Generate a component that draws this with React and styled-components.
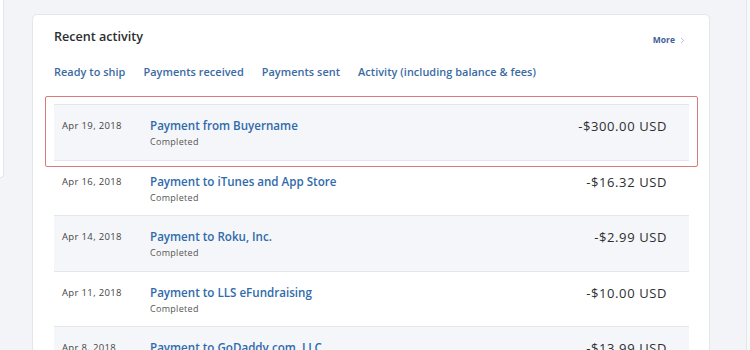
import React from "react";
import styled, { createGlobalStyle } from "styled-components";
import { ChevronRight } from "lucide-react";

const GlobalStyle = createGlobalStyle`
  html, body {
    margin: 0;
    height: 350px;
    overflow: hidden;
    background: #f2f4f7;
    font-family: "Open Sans", "Noto Sans", sans-serif;
  }
`;

const Page = styled.div`
  display: flex;
  align-items: flex-start;
  width: 750px;
  height: 350px;
  overflow: hidden;
`;

const SideStub = styled.div`
  flex: none;
  width: 3px;
  height: 177px;
  background: #fff;
  border: 1px solid #e3e6ea;
  border-left: none;
  border-top: none;
  border-bottom-right-radius: 6px;
`;

const RightStub = styled.div`
  flex: none;
  width: 3px;
  height: 350px;
  margin-left: auto;
  background: #f8f9fb;
  border-left: 1px solid #e3e6ea;
`;

const Card = styled.section`
  flex: none;
  box-sizing: border-box;
  width: 678px;
  margin: 14px 0 0 28px;
  padding: 13px 20px 0 21px;
  background: #fff;
  border: 1px solid #e3e6ea;
  border-radius: 5px;
`;

const Header = styled.div`
  display: flex;
  align-items: flex-end;
  justify-content: space-between;
  padding-right: 2px;
`;

const Title = styled.h2`
  margin: 0;
  font-size: 12.6px;
  line-height: 17px;
  font-weight: 600;
  color: #2c2e2f;
`;

const More = styled.a`
  display: flex;
  align-items: center;
  gap: 3px;
  margin-bottom: -1px;
  font-size: 8.5px;
  line-height: 12px;
  font-weight: 700;
  color: #3f5f95;
  text-decoration: none;
  svg {
    color: #6f8fc0;
  }
`;

const Tabs = styled.nav`
  display: flex;
  gap: 18px;
  margin-top: 19px;
`;

const Tab = styled.a`
  font-size: 10.9px;
  line-height: 15px;
  font-weight: 600;
  letter-spacing: 0.05px;
  color: #3a6aa3;
  text-decoration: none;
`;

const List = styled.div`
  margin-top: 25px;
`;

const Row = styled.div`
  position: relative;
  box-sizing: border-box;
  display: flex;
  align-items: flex-start;
  height: 55.5px;
  padding: 13px 22px 0 8px;
  border-top: 1px solid #e3e6ea;
  background: ${(p) => (p.$shaded ? "#f5f6f9" : "#fff")};
`;

const DateCell = styled.div`
  flex: none;
  width: 88px;
  font-size: 9.5px;
  line-height: 16px;
  letter-spacing: 0.35px;
  color: #444;
`;

const Info = styled.div`
  flex: 1;
`;

const Name = styled.div`
  font-size: 11.6px;
  line-height: 16px;
  font-weight: 600;
  color: #2f6aab;
`;

const Status = styled.div`
  margin-top: 1px;
  font-size: 9px;
  line-height: 13px;
  letter-spacing: 0.3px;
  color: #555;
`;

const Amount = styled.div`
  font-size: 13px;
  line-height: 16px;
  letter-spacing: 0.6px;
  color: #2c2e2f;
`;

const Highlight = styled.div`
  position: absolute;
  z-index: 2;
  top: -9px;
  left: -9px;
  right: -9px;
  bottom: -7px;
  border: 1.5px solid #d97b7b;
  border-radius: 2px;
  pointer-events: none;
`;

const activity = [
  { date: "Apr 19, 2018", name: "Payment from Buyername", amount: "-$300.00 USD" },
  { date: "Apr 16, 2018", name: "Payment to iTunes and App Store", amount: "-$16.32 USD" },
  { date: "Apr 14, 2018", name: "Payment to Roku, Inc.", amount: "-$2.99 USD" },
  { date: "Apr 11, 2018", name: "Payment to LLS eFundraising", amount: "-$10.00 USD" },
  { date: "Apr 8, 2018", name: "Payment to GoDaddy.com, LLC", amount: "-$13.99 USD" },
];

export default function App() {
  return (
    <>
      <GlobalStyle />
      <Page>
        <SideStub />
        <Card>
          <Header>
            <Title>Recent activity</Title>
            <More href="#">
              More <ChevronRight size={9} strokeWidth={1.6} />
            </More>
          </Header>
          <Tabs>
            <Tab href="#">Ready to ship</Tab>
            <Tab href="#">Payments received</Tab>
            <Tab href="#">Payments sent</Tab>
            <Tab href="#">Activity (including balance &amp; fees)</Tab>
          </Tabs>
          <List>
            {activity.map((item, i) => (
              <Row key={item.date} $shaded={i % 2 === 0}>
                {i === 0 && <Highlight />}
                <DateCell>{item.date}</DateCell>
                <Info>
                  <Name>{item.name}</Name>
                  <Status>Completed</Status>
                </Info>
                <Amount>{item.amount}</Amount>
              </Row>
            ))}
          </List>
        </Card>
        <RightStub />
      </Page>
    </>
  );
}
